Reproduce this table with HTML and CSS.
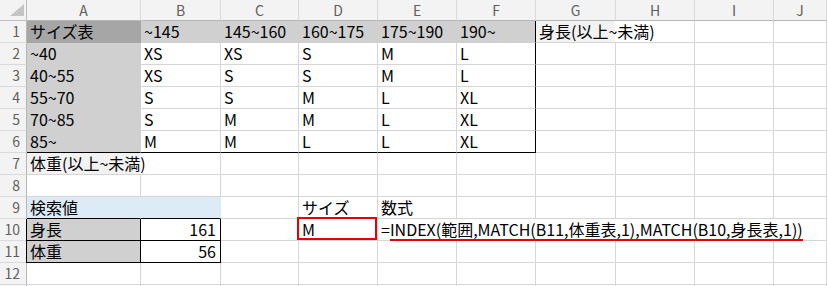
FILE: index.html
```html
<!DOCTYPE html>
<html lang="ja">
<head>
    <meta charset="UTF-8">
    <title>サイズ表</title>
    <link rel="stylesheet" href="styles.css">
</head>
<body>
    <div class="sheet">
        <!-- column letters -->
        <div class="corner"></div>
        <div class="col-head">A</div>
        <div class="col-head">B</div>
        <div class="col-head">C</div>
        <div class="col-head">D</div>
        <div class="col-head">E</div>
        <div class="col-head">F</div>
        <div class="col-head">G</div>
        <div class="col-head">H</div>
        <div class="col-head">I</div>
        <div class="col-head">J</div>

        <!-- size table -->
        <div class="row-head">1</div>
        <div class="cell fill-dark">サイズ表</div>
        <div class="cell fill">~145</div>
        <div class="cell fill">145~160</div>
        <div class="cell fill">160~175</div>
        <div class="cell fill">175~190</div>
        <div class="cell fill edge-r">190~</div>
        <div class="cell span-2 note">身長(以上~未満)</div>
        <div class="cell"></div>
        <div class="cell"></div>

        <div class="row-head">2</div>
        <div class="cell fill">~40</div>
        <div class="cell">XS</div>
        <div class="cell">XS</div>
        <div class="cell">S</div>
        <div class="cell">M</div>
        <div class="cell edge-r">L</div>
        <div class="cell"></div>
        <div class="cell"></div>
        <div class="cell"></div>
        <div class="cell"></div>

        <div class="row-head">3</div>
        <div class="cell fill">40~55</div>
        <div class="cell">XS</div>
        <div class="cell">S</div>
        <div class="cell">S</div>
        <div class="cell">M</div>
        <div class="cell edge-r">L</div>
        <div class="cell"></div>
        <div class="cell"></div>
        <div class="cell"></div>
        <div class="cell"></div>

        <div class="row-head">4</div>
        <div class="cell fill">55~70</div>
        <div class="cell">S</div>
        <div class="cell">S</div>
        <div class="cell">M</div>
        <div class="cell">L</div>
        <div class="cell edge-r">XL</div>
        <div class="cell"></div>
        <div class="cell"></div>
        <div class="cell"></div>
        <div class="cell"></div>

        <div class="row-head">5</div>
        <div class="cell fill">70~85</div>
        <div class="cell">S</div>
        <div class="cell">M</div>
        <div class="cell">M</div>
        <div class="cell">L</div>
        <div class="cell edge-r">XL</div>
        <div class="cell"></div>
        <div class="cell"></div>
        <div class="cell"></div>
        <div class="cell"></div>

        <div class="row-head">6</div>
        <div class="cell fill edge-b">85~</div>
        <div class="cell edge-b">M</div>
        <div class="cell edge-b">M</div>
        <div class="cell edge-b">L</div>
        <div class="cell edge-b">L</div>
        <div class="cell edge-r edge-b">XL</div>
        <div class="cell"></div>
        <div class="cell"></div>
        <div class="cell"></div>
        <div class="cell"></div>

        <div class="row-head">7</div>
        <div class="cell span-2 note note-wide">体重(以上~未満)</div>
        <div class="cell"></div>
        <div class="cell"></div>
        <div class="cell"></div>
        <div class="cell"></div>
        <div class="cell"></div>
        <div class="cell"></div>
        <div class="cell"></div>
        <div class="cell"></div>

        <div class="row-head">8</div>
        <div class="cell"></div>
        <div class="cell"></div>
        <div class="cell"></div>
        <div class="cell"></div>
        <div class="cell"></div>
        <div class="cell"></div>
        <div class="cell"></div>
        <div class="cell"></div>
        <div class="cell"></div>
        <div class="cell"></div>

        <!-- lookup -->
        <div class="row-head">9</div>
        <div class="cell fill-blue">検索値</div>
        <div class="cell fill-blue"></div>
        <div class="cell"></div>
        <div class="cell">サイズ</div>
        <div class="cell">数式</div>
        <div class="cell"></div>
        <div class="cell"></div>
        <div class="cell"></div>
        <div class="cell"></div>
        <div class="cell"></div>

        <div class="row-head">10</div>
        <div class="cell fill boxed boxed-l">身長</div>
        <div class="cell boxed num">161</div>
        <div class="cell"></div>
        <div class="cell result">M</div>
        <div class="cell span-6">=<span class="uline">INDEX(範囲,MATCH(B11,体重表,1),MATCH(B10,身長表,1))</span></div>

        <div class="row-head">11</div>
        <div class="cell fill boxed boxed-l">体重</div>
        <div class="cell boxed num">56</div>
        <div class="cell"></div>
        <div class="cell"></div>
        <div class="cell"></div>
        <div class="cell"></div>
        <div class="cell"></div>
        <div class="cell"></div>
        <div class="cell"></div>
        <div class="cell"></div>

        <div class="row-head">12</div>
        <div class="cell"></div>
        <div class="cell"></div>
        <div class="cell"></div>
        <div class="cell"></div>
        <div class="cell"></div>
        <div class="cell"></div>
        <div class="cell"></div>
        <div class="cell"></div>
        <div class="cell"></div>
        <div class="cell"></div>

        <!-- next row, only its top edge shows -->
        <div class="row-head"></div>
        <div class="cell"></div>
        <div class="cell"></div>
        <div class="cell"></div>
        <div class="cell"></div>
        <div class="cell"></div>
        <div class="cell"></div>
        <div class="cell"></div>
        <div class="cell"></div>
        <div class="cell"></div>
        <div class="cell"></div>
    </div>
</body>
</html>
```

FILE: styles.css
```css
* {
    margin: 0;
    padding: 0;
    box-sizing: border-box;
}

body {
    background: #fff;
    font-family: "Noto Sans CJK JP", "Noto Sans", sans-serif;
    overflow: hidden;
}

.sheet {
    display: grid;
    grid-template-columns: 27px 114px 80px 78px 79px 79px 79px 80px 79px 79px 53px;
    grid-template-rows: 21px repeat(13, 22px);
    height: 286px;
    overflow: hidden;
    font-size: 16px;
    color: #000;
}

/* headers */
.corner,
.col-head,
.row-head {
    background: #f3f3f3;
    color: #5f5f5f;
    font-size: 14px;
}

.corner {
    position: relative;
    border-right: 1px solid #bdbdbd;
    border-bottom: 1px solid #bdbdbd;
}

.corner::after {
    content: '';
    position: absolute;
    right: 2px;
    bottom: 4px;
    width: 14px;
    height: 12px;
    background: #c4c4c4;
    clip-path: polygon(100% 0, 100% 100%, 0 100%);
}

.col-head {
    border-right: 1px solid #dadada;
    border-bottom: 1px solid #b5b5b5;
    text-align: center;
    line-height: 20px;
}

.row-head {
    border-right: 1px solid #b5b5b5;
    border-bottom: 1px solid #dadada;
    text-align: right;
    padding-right: 6px;
    line-height: 21px;
}

/* cells */
.cell {
    border-right: 1px solid #d6d6d6;
    border-bottom: 1px solid #d6d6d6;
    padding-left: 3px;
    line-height: 21px;
    white-space: nowrap;
}

.span-2 { grid-column: span 2; }
.span-6 { grid-column: span 6; }

.fill {
    background: #d0d0d0;
    border-color: #d0d0d0;
}

.fill-dark {
    background: #a6a6a6;
    border-color: #a6a6a6;
}

.fill-blue {
    background: #ddebf7;
    border-color: #ddebf7;
    border-bottom-color: #000;
}

/* labels that run over into the next column */
.note {
    background: linear-gradient(to right, #f2f2f2 79px, #fff 79px);
}

.note-wide {
    background: linear-gradient(to right, #f2f2f2 113px, #fff 113px);
}

.edge-r { border-right-color: #000; }
.edge-b { border-bottom-color: #000; }

.boxed {
    border-right-color: #000;
    border-bottom-color: #000;
}

.boxed-l {
    box-shadow: -1px 0 0 #000;
}

.num {
    text-align: right;
    padding-right: 4px;
}

.result {
    position: relative;
}

.result::after {
    content: '';
    position: absolute;
    left: -2px;
    top: -2px;
    right: 0;
    bottom: 0;
    border: 2px solid #e60000;
}

.uline {
    display: inline-block;
    position: relative;
    height: 21px;
}

.uline::after {
    content: '';
    position: absolute;
    left: 0;
    right: 0;
    bottom: -1px;
    height: 2px;
    background: #e60000;
}
```
